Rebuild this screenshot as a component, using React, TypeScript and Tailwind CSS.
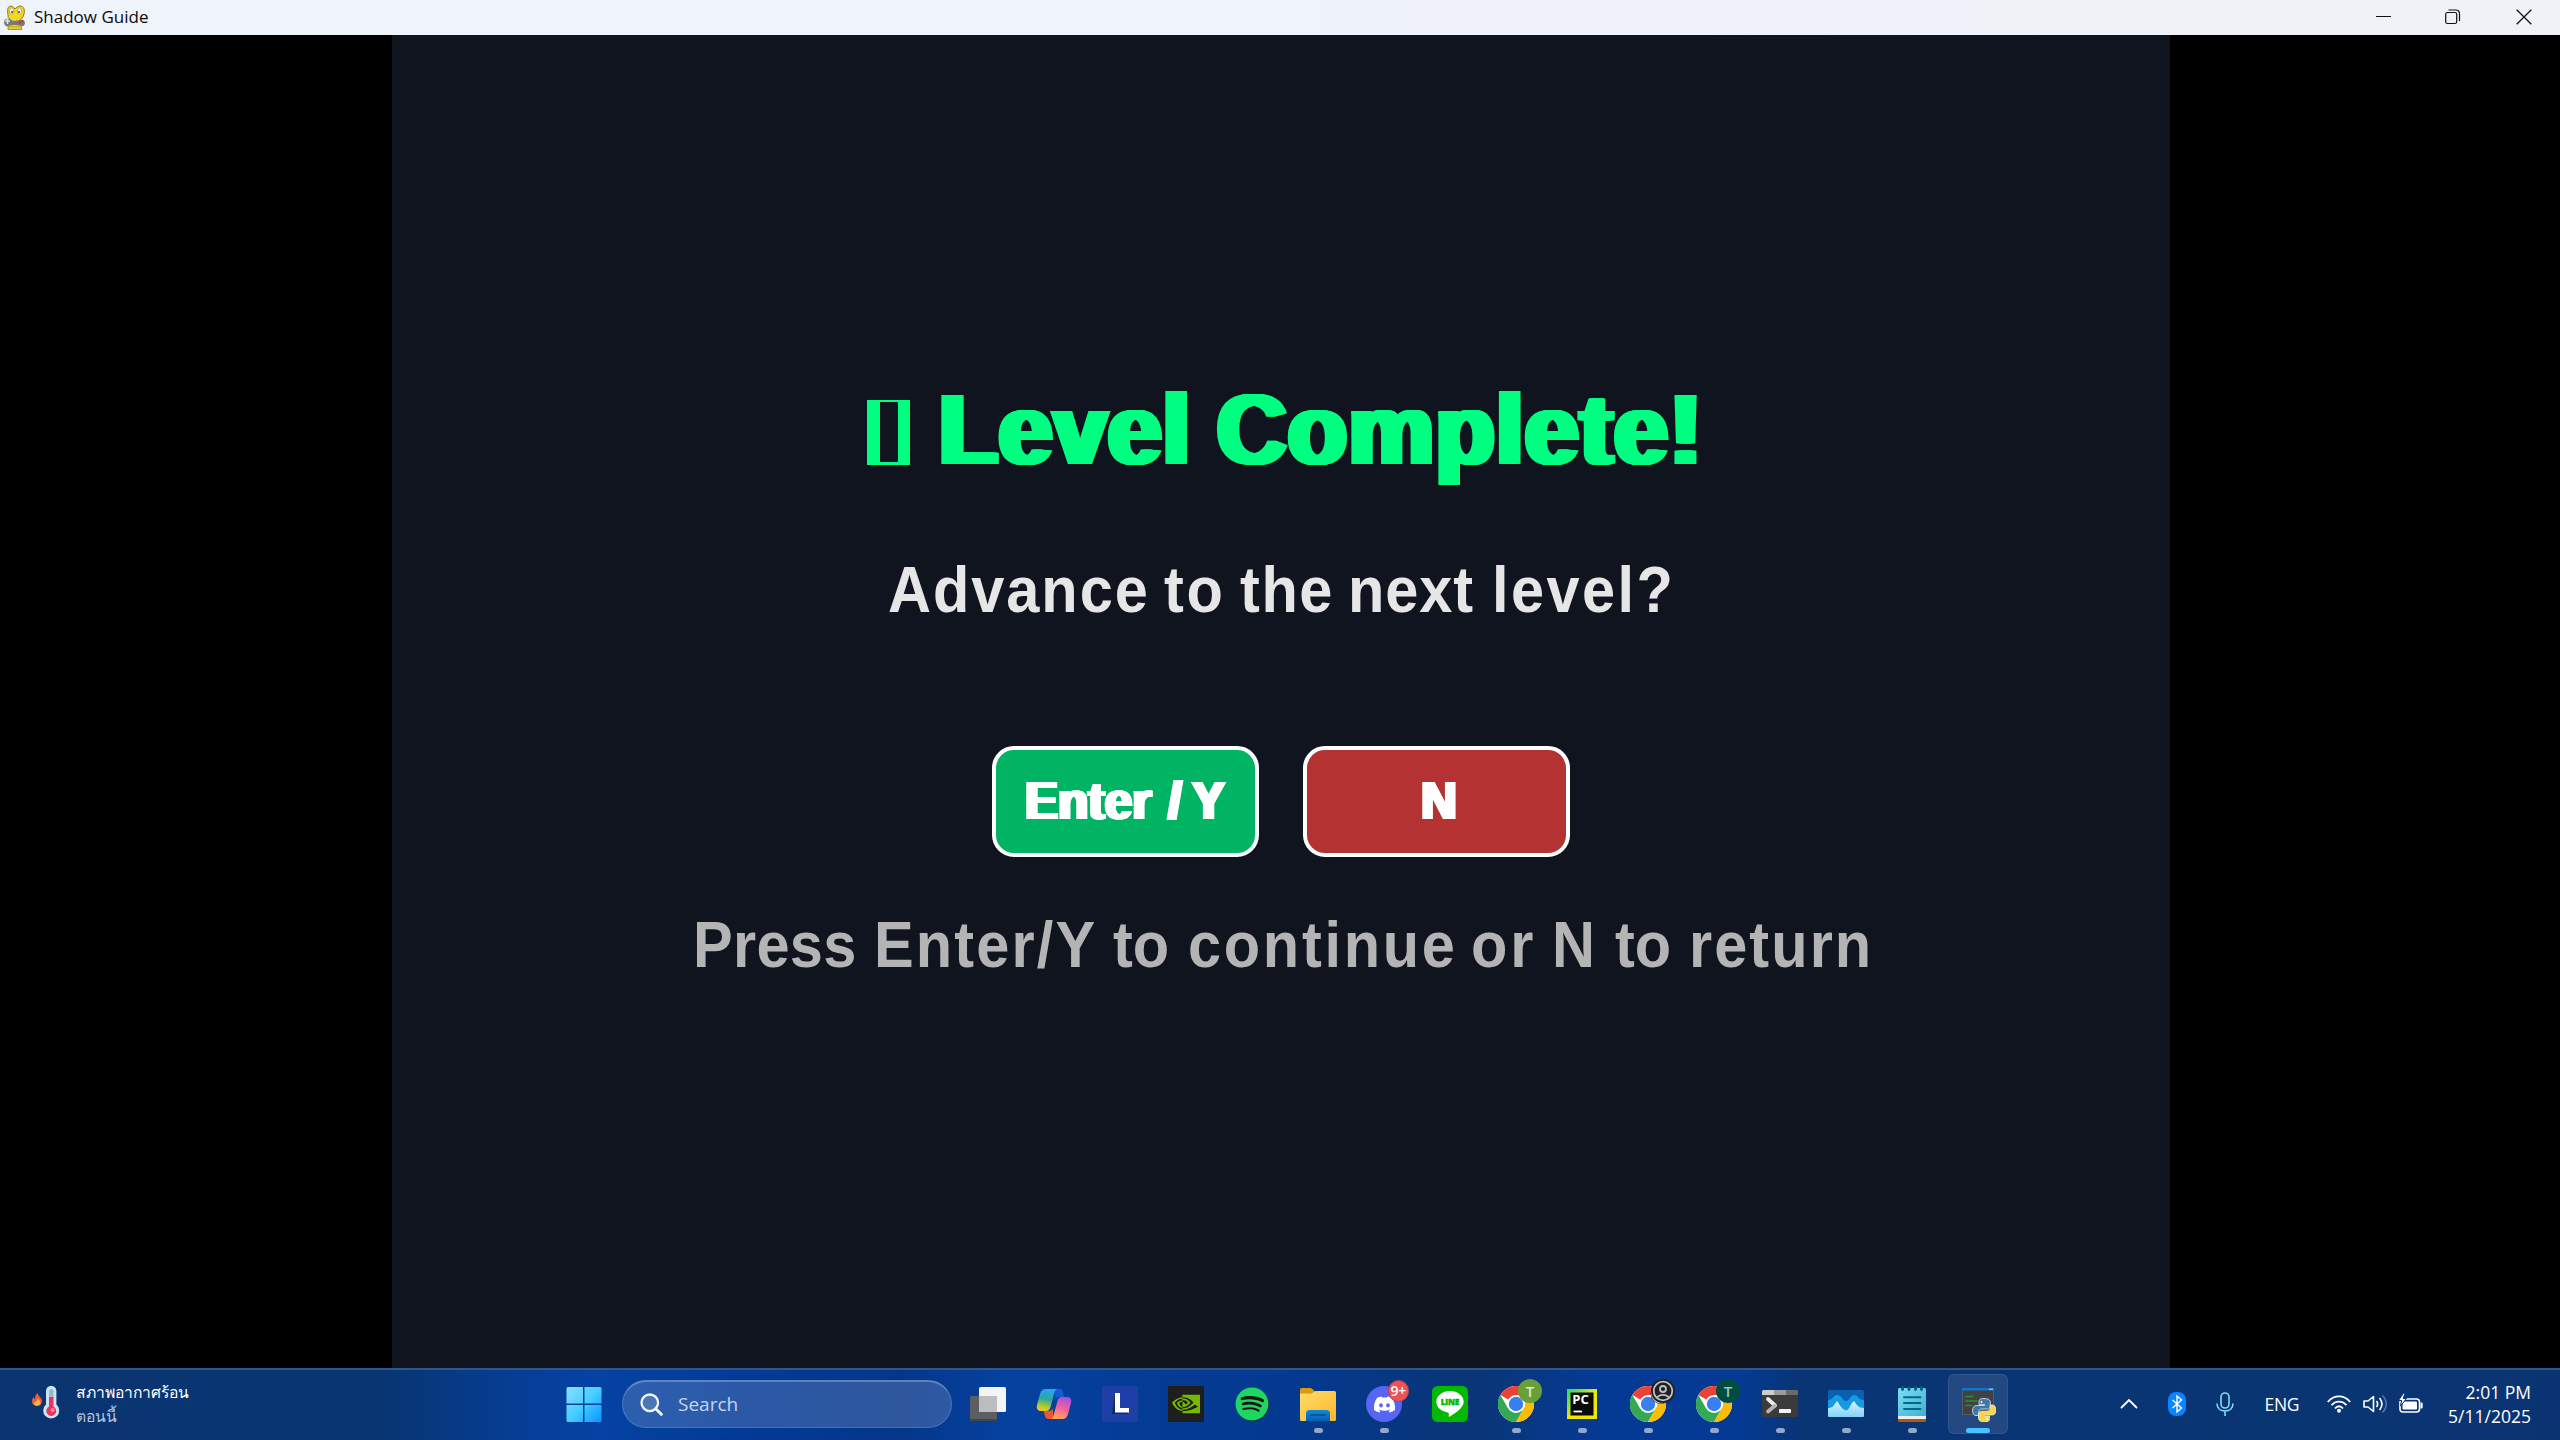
import React from 'react';
import { FaDiscord, FaSpotify } from 'react-icons/fa';
import { SiNvidia } from 'react-icons/si';

type WordSpec = { text: string; box: string };

const HEADLINE: WordSpec[] = [
  { text: 'Level', box: 'w-[278px] tracking-[1.7px]' },
  { text: 'Complete!', box: 'w-[490px] tracking-[2.4px]' },
];

const QUESTION: WordSpec[] = [
  { text: 'Advance', box: 'w-[275.7px] tracking-[2.1px]' },
  { text: 'to', box: 'w-[76.6px] tracking-[2.9px]' },
  { text: 'the', box: 'w-[108px] tracking-[1.7px]' },
  { text: 'next', box: 'w-[143.4px] tracking-[1px]' },
  { text: 'level?', box: 'w-[190px] tracking-[2.6px]' },
];

const HINT: WordSpec[] = [
  { text: 'Press', box: 'w-[181.6px] tracking-[0.3px]' },
  { text: 'Enter/Y', box: 'w-[238.8px] tracking-[2.3px]' },
  { text: 'to', box: 'w-[74.9px] tracking-[0px]' },
  { text: 'continue', box: 'w-[283.3px] tracking-[2.9px]' },
  { text: 'or', box: 'w-[80.8px] tracking-[3.2px]' },
  { text: 'N', box: 'w-[63.6px]' },
  { text: 'to', box: 'w-[74px] tracking-[0px]' },
  { text: 'return', box: 'w-[190px] tracking-[2.2px]' },
];

const HEAVY_LG =
  '[text-shadow:1px_0_#00ff80,2px_0_#00ff80,3px_0_#00ff80,4px_0_#00ff80,5px_0_#00ff80,6px_0_#00ff80,7px_0_#00ff80,8px_0_#00ff80,9px_0_#00ff80]';
const HEAVY_SM = '[text-shadow:1px_0_#fff,2px_0_#fff,3px_0_#fff,4px_0_#fff,4.5px_0_#fff]';

function Words({ words, scale }: { words: WordSpec[]; scale: string }) {
  return (
    <>
      {words.map((w, i) => (
        <span key={i} className={`block shrink-0 whitespace-nowrap ${w.box}`}>
          <span className={`inline-block origin-left ${scale}`}>{w.text}</span>
        </span>
      ))}
    </>
  );
}

function SnakeIcon() {
  return (
    <svg width="22" height="25" viewBox="0 0 22 25">
      <path d="M4 10C3 4 4 1 7 1c2 0 3 2 4 3 1-1 3-3 5-3 4 0 5 4 4 8-1 3-2 5-4 6v3H6v-4C4 13 4 12 4 10z" fill="#f3d722" stroke="#8a7a1c" strokeWidth="1" />
      <ellipse cx="7.5" cy="6" rx="2.2" ry="3.2" fill="#f6f2d8" stroke="#a08f22" strokeWidth=".6" />
      <ellipse cx="15.5" cy="6" rx="2.2" ry="3.2" fill="#f6f2d8" stroke="#a08f22" strokeWidth=".6" />
      <circle cx="8" cy="7" r=".9" fill="#333" />
      <circle cx="15" cy="7" r=".9" fill="#333" />
      <path d="M4 21h13l1 3.500H4z" fill="#e8cc1d" stroke="#7a6c18" strokeWidth=".6" />
      <path d="M0 17c0-3 3-4 5-3l5 2 6-1c3-1 5 1 5 3s-2 4-4 3l-4-1H8l-4 1c-2 1-4-1-4-4z" fill="#77797a" />
      <path d="M1 16h5M3.500 14v5" stroke="#e4e4e4" strokeWidth="1.500" />
      <circle cx="16" cy="17.500" r="1.200" fill="#e03030" />
      <circle cx="18.500" cy="16" r="1" fill="#c52a2a" />
    </svg>
  );
}

function TitleBar() {
  return (
    <header className="flex h-[35px] items-center bg-gradient-to-r from-[#eff3fb] via-[#eff3fa] to-[#eff3f8] pl-[4px] text-[#0b0b0b]">
      <SnakeIcon />
      <span className="ml-[8px] -mt-px text-[17px] leading-[34px]">Shadow Guide</span>
      <div className="ml-auto flex h-full items-center pb-px">
        <span className="flex w-[69px] justify-center">
          <svg width="16" height="16" viewBox="0 0 16 16"><path d="M0 7.500h15" stroke="#111" /></svg>
        </span>
        <span className="flex w-[70px] justify-center">
          <svg width="16" height="16" viewBox="0 0 16 16" fill="none" stroke="#111" strokeWidth="1.200">
            <rect x=".7" y="3.500" width="11" height="11" rx="1.800" />
            <path d="M3.500 1h7.500a3.500 3.500 0 0 1 3.500 3.500V12" />
          </svg>
        </span>
        <span className="flex w-[72px] justify-center">
          <svg width="16" height="16" viewBox="0 0 16 16"><path d="M.7.7l14.600 14.600M15.300.7L.7 15.300" stroke="#111" strokeWidth="1.300" /></svg>
        </span>
      </div>
    </header>
  );
}

function GameStage() {
  return (
    <main className="flex h-[1333px] bg-black font-['Liberation_Sans',Arial,sans-serif] font-bold [font-kerning:none]">
      <div className="ml-[392px] flex w-[1778px] flex-col bg-[#10141e]">
        <h1 className={`mt-[344px] flex h-[100px] pl-[475.3px] text-[101px] leading-[100px] text-[#00ff80] ${HEAVY_LG}`}>
          <span className="mt-[20.5px] mr-[24.7px] h-[65px] w-[43px] shrink-0 border-t-2 border-r-[12.500px] border-b-[3px] border-l-[13px] border-[#00ff80]" />
          <Words words={HEADLINE} scale="scale-x-[0.944]" />
        </h1>
        <p className="mt-[75.500px] flex h-[70px] pl-[496px] text-[64px] leading-[70px] text-[#e6e6e6]">
          <Words words={QUESTION} scale="scale-x-[0.93]" />
        </p>
        <div className="mt-[121.500px] flex h-[111px] gap-[44px] pl-[600px] text-[53px] leading-[102px] text-white">
          <button className={`flex w-[267px] rounded-[22px] border-[4.500px] border-white bg-[#00b464] pl-[27px] ${HEAVY_SM}`}>
            <Words
              words={[
                { text: 'Enter', box: 'w-[136px] tracking-[0.1px]' },
                { text: '/', box: 'w-[29px]' },
                { text: 'Y', box: 'w-[40px]' },
              ]}
              scale="scale-x-[0.93]"
            />
          </button>
          <button className={`flex w-[267px] rounded-[22px] border-[4.500px] border-white bg-[#b43232] pl-[106px] ${HEAVY_SM}`}>
            <Words words={[{ text: 'N', box: 'w-[50px]' }]} scale="scale-x-[0.93]" />
          </button>
        </div>
        <p className="mt-[53px] flex h-[70px] pl-[300.500px] text-[64px] leading-[70px] text-[#b4b4b4]">
          <Words words={HINT} scale="scale-x-[0.93]" />
        </p>
      </div>
    </main>
  );
}

function WeatherIcon() {
  return (
    <svg width="28" height="36" viewBox="0 0 28 36">
      <path d="M5.500 8c.3 3 4.800 4.500 4.500 8.500-.2 3-2.300 4.500-5 4.500S0 19.300 0 16.500c0-2 .8-3.500 1.500-4.500.3 1 .8 1.500 1.500 1.700C3 11.500 3.700 9.300 5.500 8z" fill="#f0583c" />
      <path d="M6 13c.3 2 2.500 2.500 2.500 4.500S7 20.700 5 20.700s-3.200-1.200-3.200-3C3 17.500 5.500 16 6 13z" fill="#fdb640" />
      <path d="M14 6a5.200 5.200 0 0 1 10.400 0v13.500a8 8 0 1 1-10.400 0z" fill="#c9e4fb" />
      <rect x="17" y="4" width="4.500" height="10" rx="2.200" fill="#9fb6c9" />
      <path d="M17 12h4.500v9.500a5 5 0 1 1-4.500 0z" fill="#f0325a" />
      <circle cx="20.500" cy="25" r="2" fill="#f98ba2" />
    </svg>
  );
}

function StartIcon() {
  return (
    <svg width="36" height="36" viewBox="0 0 36 36">
      <defs>
        <linearGradient id="win" x1="0" y1="0" x2="1" y2="1">
          <stop offset="0" stopColor="#8be0ff" />
          <stop offset=".5" stopColor="#45cfff" />
          <stop offset="1" stopColor="#0794ff" />
        </linearGradient>
      </defs>
      <path fill="url(#win)" d="M2 1h15v16.500H.5V2.500A1.500 1.500 0 0 1 2 1zM18.500 1H34a1.500 1.500 0 0 1 1.500 1.500v15h-17zM.5 19H17v17H2a1.500 1.500 0 0 1-1.500-1.500zM18.500 19h17v15.500A1.500 1.500 0 0 1 34 36H18.500z" />
    </svg>
  );
}

function TaskViewIcon() {
  return (
    <svg width="36" height="36" viewBox="0 0 36 36">
      <rect x="0" y="10" width="27" height="25" rx="1.500" fill="#5c5e61" />
      <path d="M0 33h27v.5a1.500 1.500 0 0 1-1.500 1.500h-24A1.500 1.500 0 0 1 0 33.500z" fill="#424446" />
      <rect x="9" y="1" width="27" height="25" rx="1.500" fill="#f3f4f5" />
      <path d="M9 10h18v16H10.500A1.500 1.500 0 0 1 9 24.500z" fill="#bcbdbf" />
    </svg>
  );
}

function CopilotIcon() {
  return (
    <svg width="36" height="36" viewBox="0 0 36 36">
      <defs>
        <linearGradient id="cpA" x1=".5" y1="0" x2=".3" y2="1">
          <stop offset="0" stopColor="#21a9f0" />
          <stop offset=".45" stopColor="#2ba7a0" />
          <stop offset=".8" stopColor="#b5cc2e" />
          <stop offset="1" stopColor="#f2c41b" />
        </linearGradient>
        <linearGradient id="cpB" x1=".7" y1="0" x2=".4" y2="1">
          <stop offset="0" stopColor="#a34fe0" />
          <stop offset=".5" stopColor="#f0629a" />
          <stop offset="1" stopColor="#ffa45c" />
        </linearGradient>
      </defs>
      <path d="M18 3h5.500c2 0 3 1.200 3.600 3l1.200 5h-5c-2 0-3 1-3.500 3z" fill="#1659d3" />
      <path d="M18 33h-5.500c-2 0-3-1.200-3.600-3l-1.400-5H13c2 0 3-1 3.500-3z" fill="#f2552c" />
      <path d="M9.500 3H22c-2 0-3 1.500-3.500 3.300l-4 14.700c-.7 2.700-2 4-4.500 4H5c-3.500 0-4.800-2.500-4-6L4 8c.8-3 2.500-5 5.500-5z" fill="url(#cpA)" />
      <path d="M26.500 33H14c2 0 3-1.500 3.500-3.300l4-14.700c.7-2.700 2-4 4.500-4h5c3.500 0 4.800 2.500 4 6l-3 11c-.8 3-2.500 5-5.500 5z" fill="url(#cpB)" />
    </svg>
  );
}

function LIcon() {
  return (
    <span className="flex size-9 bg-[#1f3ea8]">
      <svg width="36" height="36" viewBox="0 0 36 36">
        <path d="M13 7l-3 21h16v-1.500H14z" fill="#0c2f4e" />
        <path d="M13 7h5v15h9v4.500H13z" fill="#fff" />
      </svg>
    </span>
  );
}

function NvidiaIcon() {
  return (
    <span className="flex size-9 items-center justify-center bg-[#1e1e1e] text-[#76b900]">
      <SiNvidia size={28} />
    </span>
  );
}

function SpotifyIcon() {
  return (
    <span className="flex size-9 items-center justify-center">
      <span className="flex size-[33px] items-center justify-center rounded-full bg-[#191414] text-[#1ed760]">
        <FaSpotify size={34} className="shrink-0" />
      </span>
    </span>
  );
}

function FolderIcon() {
  return (
    <svg width="36" height="36" viewBox="0 0 36 36">
      <defs>
        <linearGradient id="fold" x1="0" y1="0" x2="1" y2="1">
          <stop offset="0" stopColor="#ffdc6b" />
          <stop offset="1" stopColor="#fbb829" />
        </linearGradient>
        <linearGradient id="foldB" x1="0" y1="0" x2="0" y2="1">
          <stop offset="0" stopColor="#1488d8" />
          <stop offset="1" stopColor="#0560b4" />
        </linearGradient>
      </defs>
      <path d="M0 3.500A1.500 1.500 0 0 1 1.500 2H10c1 0 1.700.3 2.400 1L15 5.500V12H0z" fill="#dc9a0a" />
      <path d="M0 9c0-1 .5-1.500 1.500-1.500H10c1.500 0 2.500-.3 3.500-1.200l1-.8c.5-.3 1-.5 1.500-.5h18.500A1.500 1.500 0 0 1 36 6.500v27a1.500 1.500 0 0 1-1.500 1.500h-33A1.500 1.500 0 0 1 0 33.500z" fill="url(#fold)" />
      <path d="M6 35v-7.500a3.500 3.500 0 0 1 3.500-3.500h17a3.500 3.500 0 0 1 3.500 3.500V35z" fill="url(#foldB)" />
      <path d="M11 29h14" stroke="#094a8c" strokeWidth="1.600" strokeLinecap="round" />
    </svg>
  );
}

function DiscordIcon() {
  return (
    <span className="relative flex size-9 items-center justify-center rounded-full bg-[#5865f2] text-white">
      <FaDiscord size={23} />
      <span className="absolute -top-[6px] -right-[7px] flex size-[21.500px] items-center justify-center rounded-full border border-[#a5454f] bg-[#ee5357] text-[14px] leading-none font-semibold tracking-tight">
        9+
      </span>
    </span>
  );
}

function LineIcon() {
  return (
    <svg width="36" height="36" viewBox="0 0 36 36">
      <rect width="36" height="36" rx="5.500" fill="#00b900" />
      <path d="M18 5C10.500 5 4.300 9.800 4.300 15.800c0 5.300 4.800 9.700 11.200 10.600 1.500.3 1.500.9 1.200 3.500 0 .7.300 1 1.200.5 4.600-2.500 13.800-8.500 13.800-14.600C31.700 9.800 25.500 5 18 5z" fill="#fff" />
      <text x="18" y="19" textAnchor="middle" fontSize="8.300" fontWeight="800" fill="#00b900" stroke="#00b900" strokeWidth=".4" textLength="18.500" fontFamily="Open Sans, sans-serif">LINE</text>
    </svg>
  );
}

function ChromeIcon({ badge }: { badge?: 'green' | 'dark' | 'person' }) {
  return (
    <span className="relative flex size-9">
      <svg width="36" height="36" viewBox="0 0 36 36">
        <circle cx="18" cy="18" r="18" fill="#fff" />
        <path d="M18 18L2.400 9A18 18 0 0 1 33.600 9H18z" fill="#ea4335" />
        <path d="M2.400 9A18 18 0 0 0 18 36l7.800-13.500L18 18l-7.800 4.500z" fill="#34a853" />
        <path d="M33.600 9A18 18 0 0 1 18 36l7.800-13.500A9 9 0 0 0 18 9z" fill="#fbbc05" />
        <circle cx="18" cy="18" r="9" fill="#fff" />
        <circle cx="18" cy="18" r="7.200" fill="#3a7ff0" />
      </svg>
      {badge === 'green' && (
        <span className="absolute -top-[7px] -right-[8px] flex size-[24px] items-center justify-center rounded-full bg-[#689f38] text-[15px] leading-none font-semibold text-[#dbe8cc]">T</span>
      )}
      {badge === 'dark' && (
        <span className="absolute -top-[7px] -right-[8px] flex size-[24px] items-center justify-center rounded-full bg-[#004d40] text-[15px] leading-none font-semibold text-[#9fc3ba]">T</span>
      )}
      {badge === 'person' && (
        <svg className="absolute -top-[7px] -right-[10px]" width="26" height="26" viewBox="0 0 26 26">
          <circle cx="11" cy="14.500" r="10.500" fill="#202124" />
          <circle cx="11" cy="14.300" r="9.500" fill="none" stroke="#d0d1d3" strokeWidth="1.200" />
          <circle cx="13" cy="12" r="12" fill="#202124" />
          <g fill="none" stroke="#bfc0c2" strokeWidth="1.800">
            <circle cx="13" cy="12" r="9.300" />
            <circle cx="13" cy="10" r="3" />
            <path d="M7 18.500c3-3.500 9-3.500 12 0" />
          </g>
        </svg>
      )}
    </span>
  );
}

function PyCharmIcon() {
  return (
    <svg width="36" height="36" viewBox="0 0 36 36">
      <defs>
        <linearGradient id="pyc" x1="0" y1="0" x2=".5" y2=".5">
          <stop offset="0" stopColor="#1fdc7c" />
          <stop offset=".5" stopColor="#7ddf3a" />
          <stop offset="1" stopColor="#ece60e" />
        </linearGradient>
      </defs>
      <rect x="3" y="3" width="30" height="30" fill="url(#pyc)" />
      <rect x="6.500" y="6.500" width="23" height="23" fill="#0a0a08" />
      <text x="8.300" y="17.800" fontSize="12" fontWeight="700" fill="#fff" textLength="16.500" lengthAdjust="spacingAndGlyphs" fontFamily="Open Sans, sans-serif">PC</text>
      <path d="M9.500 25.500h8.500" stroke="#fff" strokeWidth="1.800" />
    </svg>
  );
}

function TerminalIcon() {
  return (
    <svg width="36" height="36" viewBox="0 0 36 36">
      <rect y="4" width="36" height="27" rx="1.500" fill="#3b3b3c" />
      <path d="M0 9V5.500A1.500 1.500 0 0 1 1.500 4H12v5z" fill="#ccc" />
      <path d="M12 4h12v5H12z" fill="#9b9b9b" />
      <path d="M24 4h10.500A1.500 1.500 0 0 1 36 5.500V9H24z" fill="#6b6b6c" />
      <path d="M6 13l7 6.500" stroke="#ececec" strokeWidth="3.800" strokeLinecap="round" />
      <path d="M12.500 20L6 25.500" stroke="#b4b4b4" strokeWidth="3.800" strokeLinecap="round" />
      <rect x="17" y="23" width="12" height="4" rx=".7" fill="#f2f2f2" />
    </svg>
  );
}

function MonitorIcon() {
  return (
    <svg width="36" height="36" viewBox="0 0 36 36">
      <defs>
        <clipPath id="mon"><rect y="4" width="36" height="27" rx="1.500" /></clipPath>
        <linearGradient id="monW" x1="0" y1="0" x2="0" y2="1">
          <stop offset="0" stopColor="#d5f2ff" />
          <stop offset="1" stopColor="#84d2fb" />
        </linearGradient>
      </defs>
      <g clipPath="url(#mon)">
        <path d="M0 4h36v27H0z" fill="#0860b2" />
        <path d="M0 14c5 0 5-5 9-5 5 0 5 6 9 6s4-6 8-6 4 5 10 5v17H0z" fill="#169be2" />
        <path d="M0 22c5 0 5-2 9-7 3 4 5 9 9.500 9.500C22 23 22 18 26 15c3 4 4 7 10 7v9H0z" fill="url(#monW)" />
      </g>
    </svg>
  );
}

function NotepadIcon() {
  return (
    <svg width="36" height="36" viewBox="0 0 36 36">
      <defs>
        <linearGradient id="note" x1="0" y1="0" x2="1" y2="1">
          <stop offset="0" stopColor="#7edcf1" />
          <stop offset="1" stopColor="#3db2d2" />
        </linearGradient>
      </defs>
      <path d="M4 29h28v5.500a1.500 1.500 0 0 1-1.500 1.500h-25A1.500 1.500 0 0 1 4 34.500z" fill="#b8540d" />
      <path d="M4 28h28v5H4z" fill="#eceef0" />
      <path d="M4 3.500A1.500 1.500 0 0 1 5.500 2h25A1.500 1.500 0 0 1 32 3.500V30H4z" fill="url(#note)" />
      <path d="M10 11.200h16.500M10 17h16.500M10 23h16.500" stroke="#05668b" strokeWidth="2" strokeLinecap="round" />
      <path d="M8.500 1.500v2M15 1.500v2M21.500 1.500v2M27.500 1.500v2" stroke="#07597a" strokeWidth="2.800" strokeLinecap="round" />
    </svg>
  );
}

function PythonConsoleIcon() {
  return (
    <svg width="36" height="36" viewBox="0 0 36 36">
      <rect x="2.500" y="2.500" width="31" height="26" fill="#3f4143" stroke="#5e6468" strokeWidth=".8" />
      <path d="M2 2h32v2.500H2z" fill="#0f77cc" />
      <path d="M29 3.200h4" stroke="#b9dcf7" strokeWidth="1" />
      <path d="M5.500 10.500h8M5.500 15h12M5.500 19.500h7" stroke="#2f8f36" strokeWidth="1.400" />
      <g transform="translate(12 12)" stroke="#e9eff3" strokeWidth=".8">
        <path d="M12 .5c-5 0-5 2-5 3.500V6.500h5.500v1H4.500C2 7.500.5 9.500.5 12.500s1.500 5 3.500 5h2.500V14.500c0-2 1.500-3.500 3.500-3.500h5.500c1.600 0 2.800-1.300 2.800-3V4c0-2-2-3.500-6.300-3.500z" fill="#3c78aa" />
        <path d="M12.500 24c5 0 5-2 5-3.500V18H12v-1h8c2.500 0 4-2 4-5s-1.500-5-3.500-5H18.300v2.700c0 2-1.500 3.500-3.300 3.500H9.500c-1.600 0-3 1.300-3 3V20c0 2.500 2 4 6 4z" fill="#fcd546" />
        <circle cx="9.500" cy="4" r="1" fill="#fff" stroke="none" />
        <circle cx="15" cy="20.700" r="1" fill="#fff" stroke="none" />
      </g>
    </svg>
  );
}

function Slot({ children, state }: { children: React.ReactNode; state?: 'open' | 'active' }) {
  return (
    <div
      className={`mx-[3px] mt-1 flex size-[60px] shrink-0 flex-col items-center rounded-[6px] pt-3 ${
        state === 'active' ? 'bg-white/10 shadow-[inset_0_0_0_1px_rgba(255,255,255,0.07)]' : ''
      }`}
    >
      {children}
      {state === 'open' && <span className="mt-[6px] h-[5px] w-[9px] rounded-full bg-[#93a6cc]" />}
      {state === 'active' && <span className="mt-[6px] h-[5px] w-[24px] rounded-full bg-[#4cc2ff]" />}
    </div>
  );
}

function Tray() {
  return (
    <div className="ml-auto flex h-[68px] items-center text-white">
      <svg width="18" height="12" viewBox="0 0 18 12" fill="none" stroke="#fff" strokeWidth="1.800" strokeLinecap="round">
        <path d="M1.500 9.500L9 2l7.500 7.500" />
      </svg>
      <span className="ml-[30px] flex h-6 w-[18px] items-center justify-center rounded-[8px] bg-[#0a84ff]">
        <svg width="12" height="18" viewBox="0 0 12 18" fill="none" stroke="#fff" strokeWidth="1.400">
          <path d="M1.500 5l9 8L6 17V1l4.500 4-9 8" />
        </svg>
      </span>
      <svg className="ml-[30px]" width="18" height="24" viewBox="0 0 18 24" fill="none" stroke="#7fdcf5" strokeWidth="1.600">
        <rect x="5" y="1" width="8" height="15" rx="4" />
        <path d="M1 11.500c0 5 3.500 7.500 8 7.500s8-2.500 8-7.500M9 19v5" />
      </svg>
      <span className="ml-[30.500px] w-[62.500px] text-[17.500px] leading-6 tracking-[-0.3px]">ENG</span>
      <svg width="24" height="18" viewBox="0 0 24 18" fill="none" stroke="#fff" strokeWidth="1.800">
        <path d="M.8 7C7-.5 17-.5 23.200 7M4.500 10.300c4-5 11-5 15 0M8 13.500c2.500-3 5.500-3 8 0" />
        <circle cx="12" cy="15.700" r="2" fill="#fff" stroke="none" />
      </svg>
      <svg className="ml-[12px]" width="25" height="22" viewBox="0 0 25 22" fill="none" stroke="#fff" strokeWidth="1.600">
        <path d="M1 8v6h4l5.500 4.500v-15L5 8z" strokeLinejoin="round" />
        <path d="M13.500 8c1.500 2 1.500 4 0 6M16.500 5c3.300 4 3.300 8 0 12" />
        <path d="M19.500 2.500c5 5 5 12 0 17" stroke="#5573a3" />
      </svg>
      <svg className="ml-[10px]" width="26" height="22" viewBox="0 0 26 22">
        <rect x="2" y="6" width="19.500" height="13" rx="3" fill="none" stroke="#fff" strokeWidth="1.600" />
        <rect x="4.500" y="8.500" width="14.500" height="8" rx="1" fill="#fff" />
        <path d="M22.500 9.500h1a1.200 1.200 0 0 1 1.200 1.200v3.600a1.200 1.200 0 0 1-1.200 1.200h-1z" fill="#fff" />
        <path d="M5.500 0L.5 7.500h3.200L2.500 13 8.500 5.500H5.200L7 0z" fill="#fff" stroke="#0a3471" strokeWidth="1" />
      </svg>
      <div className="-mt-px mr-[29px] flex w-[107px] flex-col text-right text-[17.500px] leading-6">
        <span>2:01 PM</span>
        <span>5/11/2025</span>
      </div>
    </div>
  );
}

function Taskbar() {
  return (
    <footer className="flex h-[72px] border-t-2 border-[#31568c] bg-[linear-gradient(90deg,#0b3470_0px,#083673_390px,#063f9b_540px,#0542a2_600px,#033a97_740px,#05368a_900px,#0542a0_1010px,#043b94_1160px,#04398f_1300px,#0a3576_1470px,#053a94_1600px,#043a94_1740px,#093575_1800px,#0a3471_2560px)] bg-origin-border">
      <div className="flex w-[551px] shrink-0 pl-[31.500px] pt-[15px]">
        <WeatherIcon />
        <div className="ml-[16.500px] flex flex-col text-[15.700px] leading-[24px] whitespace-nowrap">
          <span className="-mt-[5px] text-white">สภาพอากาศร้อน</span>
          <span className="text-[#b7c6de]">ตอนนี้</span>
        </div>
      </div>
      <Slot><StartIcon /></Slot>
      <div className="mt-[10px] mr-[3px] ml-[5px] flex h-12 w-[330px] shrink-0 items-center rounded-full border border-t-2 border-white/15 border-t-white/25 bg-white/16 pl-[17px]">
        <svg width="23" height="23" viewBox="0 0 23 23" fill="none" stroke="#f1f4f8" strokeWidth="2.300">
          <circle cx="9.800" cy="9.800" r="8.300" fill="rgba(255,255,255,0.15)" />
          <path d="M15.700 15.700l5.600 5.600" strokeWidth="3" strokeLinecap="round" />
        </svg>
        <span className="ml-[15px] -mt-px text-[19px] leading-6 text-[#c7d5ec]">Search</span>
      </div>
      <Slot><TaskViewIcon /></Slot>
      <Slot><CopilotIcon /></Slot>
      <Slot><LIcon /></Slot>
      <Slot><NvidiaIcon /></Slot>
      <Slot><SpotifyIcon /></Slot>
      <Slot state="open"><FolderIcon /></Slot>
      <Slot state="open"><DiscordIcon /></Slot>
      <Slot><LineIcon /></Slot>
      <Slot state="open"><ChromeIcon badge="green" /></Slot>
      <Slot state="open"><PyCharmIcon /></Slot>
      <Slot state="open"><ChromeIcon badge="person" /></Slot>
      <Slot state="open"><ChromeIcon badge="dark" /></Slot>
      <Slot state="open"><TerminalIcon /></Slot>
      <Slot state="open"><MonitorIcon /></Slot>
      <Slot state="open"><NotepadIcon /></Slot>
      <Slot state="active"><PythonConsoleIcon /></Slot>
      <Tray />
    </footer>
  );
}

export default function App() {
  return (
    <div className="h-[1440px] w-[2560px] overflow-hidden bg-black font-['Open_Sans','Noto_Sans',sans-serif]">
      <TitleBar />
      <GameStage />
      <Taskbar />
    </div>
  );
}
